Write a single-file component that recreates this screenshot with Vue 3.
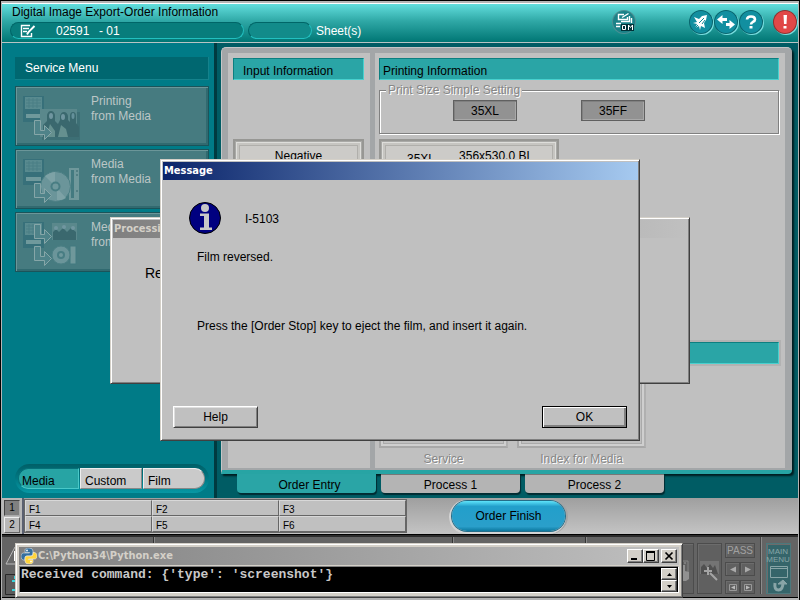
<script setup>
import { ref } from 'vue'

const services = [
  { id: 'print', lines: ['Printing', 'from Media'] },
  { id: 'media', lines: ['Media', 'from Media'] },
  { id: 'both', lines: ['Media', 'from'] },
]
const modes = ['Media', 'Custom', 'Film']
const mode = ref('Media')
const tabs = ['Order Entry', 'Process 1', 'Process 2']
const tab = ref('Order Entry')
const keys = ['F1', 'F2', 'F3', 'F4', 'F5', 'F6']
const page = ref(1)
</script>

<template>
  <div class="app">
    <header class="top">
      <div class="top-left">
        <h1>Digital Image Export-Order Information</h1>
        <div class="pills">
          <div class="pill order">
            <svg width="16" height="14" viewBox="0 0 16 14" fill="none" stroke="#fff">
              <path d="M10 1.500H1.500v11h10V9M3 4.500h6M3 7.500h4" stroke-width="1.400" />
              <path d="M14.500 2L8.500 8l-1.500 2.500" stroke-width="2" />
            </svg>
            <span class="num">02591</span><span>- 01</span>
          </div>
          <div class="pill sheets"></div>
          <span class="sheet-label">Sheet(s)</span>
        </div>
      </div>
      <div class="top-icons">
        <button class="round om" aria-label="Order manager">
          <svg width="22" height="22" viewBox="0 0 22 22" fill="none" stroke="#fff">
            <path d="M11 3.500H5.500v5h9V6M9 6.500l6.500-4" stroke-width="1.400" />
            <path d="M16.500 5v5.500H8M3 12.500h5M3 15.500h4M18.500 7v5" stroke-width="1.400" />
            <path d="M8 13h13v7H8z" fill="#003238" stroke="none" />
            <path d="M9.500 14.500h3v4h-3zM15.500 19v-5l2 2.500 2-2.500v5" />
          </svg>
        </button>
        <button class="round rocket" aria-label="Start">
          <svg width="22" height="22" viewBox="0 0 22 22">
            <path d="M17 4l-5 1-3 3-5-2 3 5-4 1 4 1-2 4 4-2 1 4 1-4 4 2-1-5 2-3z" fill="#fff" />
            <path d="M9 12l5-5M5 17l3-3M12 13l3-4" stroke="#128a96" />
          </svg>
        </button>
        <button class="round" aria-label="Switch">
          <svg width="22" height="22" viewBox="0 0 22 22" fill="#fff">
            <path d="M2 8.500L7.500 4v3H12v3H7.500v3zM20 13.500L14.500 9v3H11v3h3.500v3z" />
          </svg>
        </button>
        <button class="round" aria-label="Help">
          <svg width="22" height="22" viewBox="0 0 22 22" fill="none">
            <path d="M7 8.500Q7 5.500 11 5.500t4 3q0 1.500-2 2.300-2 1-2 2.700" stroke="#fff" stroke-width="2.600" />
            <path d="M9.500 15h3v2.500h-3z" fill="#fff" />
          </svg>
        </button>
        <button class="round alert" aria-label="Alert">
          <svg width="22" height="22" viewBox="0 0 22 22" fill="#fff">
            <path d="M9.500 4h3.500l-.5 9h-2.500zM9.500 15h3v2.500h-3z" />
          </svg>
        </button>
      </div>
    </header>

    <div class="work">
      <nav class="side">
        <h2>Service Menu</h2>
        <button v-for="s in services" :key="s.id" class="service">
          <svg width="60" height="48" viewBox="0 0 60 48">
            <path d="M1 2h21v26H1z" fill="#37707a" />
            <path d="M3 3h17v12H3z" fill="#588a8f" />
            <path d="M4 6h15M4 9h15M4 12h15M7 4v10M11 4v10M15 4v10" stroke="#4a7f85" />
            <path d="M4 20h15v4H4z" fill="#6f999c" />
            <g v-if="s.id === 'print'">
              <path d="M20 18h38v28H20z" fill="#3d6f75" />
              <path d="M18 15h37v28H18z" fill="#5a888c" />
              <path d="M21 43V31l4-4v-6q1-4 4-4t4 4v6l3 3 2-4v-4q1-4 4-4t4 4v4l2 2v-6q0-4 3-4t3 4v7l3 4v10z" fill="#3a686e" />
              <path d="M24 43l4-13 5 7v6zM36 43l3-12 5 4 2 8z" fill="#65908f" />
              <ellipse cx="29" cy="22" rx="2" ry="3" fill="#7096a0" />
              <ellipse cx="41" cy="23" rx="2" ry="3" fill="#7096a0" />
              <ellipse cx="51" cy="22" rx="1.500" ry="3" fill="#64909a" />
            </g>
            <g v-if="s.id === 'media'">
              <path d="M47 11h10v32H47z" fill="#6f989b" />
              <path d="M49 13h3v28h-3z" fill="#437a80" />
              <path d="M54 14h2M54 18h2M54 34h2" stroke="#37666c" />
              <circle cx="33.500" cy="29.500" r="15" fill="#6b959a" stroke="#4c8085" />
              <path d="M33 29L23 19q6-4 10-4zM35 31l9 10q-5 3-9 2z" fill="#7da2a6" />
              <circle cx="33.500" cy="29.500" r="5" fill="#487d83" />
              <circle cx="33.500" cy="29.500" r="3" fill="#6f999d" />
            </g>
            <g v-if="s.id === 'both'">
              <path d="M30 3h25v17H30z" fill="#5a888c" />
              <path d="M31 20v-8l3-3 3 3 4-4 4 4 4-4 5 4v8z" fill="#3a686e" />
              <circle cx="34" cy="8" r="2" fill="#7096a0" />
              <circle cx="42" cy="7" r="2" fill="#7096a0" />
              <circle cx="51" cy="8" r="2" fill="#7096a0" />
              <path d="M48 26h6v18h-6z" fill="#6f989b" stroke="#437a80" />
              <circle cx="39" cy="35" r="9" fill="#6b959a" stroke="#4c8085" />
              <circle cx="39" cy="35" r="4" fill="#487d83" />
              <circle cx="39" cy="35" r="2" fill="#6f999d" />
              <path d="M12.500 4.500h6v10h4v-5l7 7-7 7v-5h-10z" fill="#4f8389" stroke="#86a6a8" />
            </g>
            <path d="M12.500 26.500h6v10h4v-5l7 7-7 7v-5h-10z" fill="#4f8389" stroke="#86a6a8" />
          </svg>
          <span><template v-for="l in s.lines" :key="l">{{ l }}<br /></template></span>
        </button>
        <div class="modes">
          <button v-for="m in modes" :key="m" :class="{ on: m === mode }" @click="mode = m">{{ m }}</button>
        </div>
      </nav>

      <main class="stage">
        <div class="panel">
          <section class="input-col">
            <h3 class="bar">Input Information</h3>
            <button class="inset negative">Negative</button>
          </section>
          <section class="print-col">
            <h3 class="bar">Printing Information</h3>
            <fieldset>
              <legend>Print Size Simple Setting</legend>
              <div class="sizes">
                <button>35XL</button>
                <button>35FF</button>
              </div>
            </fieldset>
            <button class="inset size"><span>35XL</span><span class="dims">356x530.0 BL</span></button>
            <div class="band"></div>
            <div class="extras">
              <div class="extra"><div class="slot"></div><span>Service</span></div>
              <div class="extra"><div class="slot"></div><span>Index for Media</span></div>
            </div>
          </section>
        </div>
        <div class="tabs">
          <button v-for="t in tabs" :key="t" :class="{ on: t === tab }" @click="tab = t">{{ t }}</button>
        </div>
      </main>
    </div>

    <div class="keys">
      <div class="pages">
        <button v-for="n in 2" :key="n" :class="{ on: n === page }" @click="page = n">{{ n }}</button>
      </div>
      <div class="grid">
        <button v-for="k in keys" :key="k">{{ k }}</button>
      </div>
      <div class="finish-area"><button class="finish">Order Finish</button></div>
    </div>

    <footer class="dock">
      <div class="status">
        <svg width="30" height="18" viewBox="0 0 30 18">
          <path d="M1 17L10 0h5l10 17z" fill="#686868" stroke="#bbb" />
          <path d="M9 4h5v10H9z" fill="#fff" />
        </svg>
        <svg width="30" height="21" viewBox="0 0 30 21">
          <path d="M.5.5h28v20H.5z" fill="#5c5c5c" stroke="#292929" />
          <path d="M7 7h4v9h-4M10 2v3" stroke="#39d4dc" stroke-width="2" fill="none" />
        </svg>
      </div>
      <i class="rule"></i><i class="rule second"></i><i class="rule third"></i>
      <div class="tools">
        <button class="tall" aria-label="Film position">
          <svg width="22" height="48" viewBox="0 0 22 48">
            <path d="M0 16h18v12H0z" fill="#606060" stroke="#858585" />
            <path d="M2 18h14" stroke="#999" stroke-dasharray="2 2" />
            <path d="M9 34v-8h3v-6h3v6l4 1v7l-3 2h-5z" fill="#919191" />
          </svg>
        </button>
        <button class="tall" aria-label="Adjust picture">
          <svg width="22" height="48" viewBox="0 0 22 48">
            <path d="M2 16h19v13H2z" fill="#747474" />
            <path d="M3 29v-7l3-3 3 4 3-4 3 4 2-3 3 9z" fill="#505050" />
            <path d="M10 22v8M6 26h8M12 28l7 7" stroke="#a4a4a4" stroke-width="2" />
          </svg>
        </button>
        <div class="pads">
          <button class="pass">PASS</button>
          <div class="pair">
            <button aria-label="Previous"><svg width="13" height="13" viewBox="0 0 13 13"><path d="M10 3.500v6L4 6.500z" fill="#aaa" /></svg></button>
            <button aria-label="Next"><svg width="13" height="13" viewBox="0 0 13 13"><path d="M4 3.500v6l6-3z" fill="#aaa" /></svg></button>
          </div>
          <div class="pair">
            <button aria-label="First"><svg width="13" height="13" viewBox="0 0 13 13"><path d="M3.500 3.500h7v6h-7z" fill="none" stroke="#999" /><path d="M9 4.500v4l-4-2z" fill="#bbb" /></svg></button>
            <button aria-label="Last"><svg width="13" height="13" viewBox="0 0 13 13"><path d="M3.500 3.500h7v6h-7z" fill="none" stroke="#999" /><path d="M5 4.500v4l4-2z" fill="#bbb" /></svg></button>
          </div>
        </div>
        <i class="split"></i>
        <button class="menu">
          <span>MAIN<br />MENU</span>
          <svg width="20" height="28" viewBox="0 0 20 28" fill="none" stroke="#88a5a7">
            <path d="M1.500 1.500h17v11h-17zM1.500 3.500h17" />
            <path d="M6 18q-1 7 3.500 7t4.500-8" stroke-width="3" />
            <path d="M9 19l5-4 4 4z" fill="#88a5a7" />
          </svg>
        </button>
      </div>
    </footer>

    <section class="win processing" aria-label="Processing">
      <div class="caption">Processing</div>
      <p>Reading</p>
    </section>

    <section class="win message" role="dialog" aria-label="Message">
      <div class="caption">Message</div>
      <div class="msg">
        <div class="code">
          <svg width="32" height="32" viewBox="0 0 32 32">
            <circle cx="16" cy="16" r="15.500" fill="#000080" stroke="#000" />
            <circle cx="16" cy="6" r="4" fill="#c8c8c8" />
            <path d="M11 11.500h9v14h3V28H11v-2.500h4V14h-4z" fill="#c8c8c8" />
          </svg>
          <span>I-5103</span>
        </div>
        <p class="fact">Film reversed.</p>
        <p class="todo">Press the [Order Stop] key to eject the film, and insert it again.</p>
        <div class="actions">
          <button>Help</button>
          <button class="default">OK</button>
        </div>
      </div>
    </section>

    <section class="console" aria-label="Python console">
      <div class="caption">
        <svg width="16" height="16" viewBox="0 0 16 16">
          <path d="M8 0C4 0 4 1.500 4 3v1.500h4.500V5H2.500C.5 5 0 7 0 8.500S1 12 2.500 12H4v-2q0-2 2-2h4q2 0 2-2V3q0-3-4-3z" fill="#356f9f" stroke="#dfe6ea" stroke-width=".6" />
          <path d="M8 16c4 0 4-1.500 4-3v-1.500H7.500V11h6c2 0 2.500-1.500 2.500-3s-1-3.500-2.500-3.500H12V6q0 2-2 2H6q-2 0-2 2v3q0 3 4 3z" fill="#ffd43b" stroke="#eee" stroke-width=".6" />
          <circle cx="6" cy="2.500" r=".9" fill="#fff" /><circle cx="10" cy="13.500" r=".9" fill="#fff" />
        </svg>
        <span class="path">C:\Python34\Python.exe</span>
        <button aria-label="Minimize"><svg width="12" height="10" viewBox="0 0 12 10"><path d="M2 7h6v2H2z" /></svg></button>
        <button aria-label="Maximize"><svg width="12" height="10" viewBox="0 0 12 10"><path d="M1.500 1v8.500h8V1" fill="none" stroke="#000" /><path d="M1 0h9v2H1z" /></svg></button>
        <button class="close" aria-label="Close"><svg width="12" height="10" viewBox="0 0 12 10"><path d="M2.500 1.500l7 7M9.500 1.500l-7 7" stroke="#000" stroke-width="1.700" /></svg></button>
      </div>
      <div class="term">
        <pre>Received command: {'type': 'screenshot'}</pre>
        <div class="scroll">
          <button aria-label="Scroll up"><svg width="5" height="3" viewBox="0 0 5 3"><path d="M0 3l2.500-3L5 3z" /></svg></button>
          <button aria-label="Scroll down"><svg width="5" height="3" viewBox="0 0 5 3"><path d="M0 0l2.500 3L5 0z" /></svg></button>
        </div>
      </div>
    </section>
  </div>
</template>

<style>
body {
  background: #c0c0c0;
}
</style>

<style scoped>
* {
  box-sizing: border-box;
}
.app {
  position: relative;
  display: flex;
  flex-direction: column;
  min-height: 100vh;
  padding: 2px 1px 2px 1px;
  border-top: 1px solid #000;
  border-left: 1px solid #000;
  border-right: 1px solid #000;
  background: #b4b4b4;
  font: 12px/15px "Liberation Sans", Arial, sans-serif;
  color: #000;
  overflow: hidden;
}
button {
  font: inherit;
  color: inherit;
  padding: 0;
  margin: 0;
  border: 0;
  background: none;
}
h1, h2, h3, p, pre {
  margin: 0;
  font-size: 12px;
  font-weight: normal;
}
svg {
  display: block;
  flex: none;
}

/* header */
.top {
  display: flex;
  justify-content: space-between;
  height: 40px;
  border-top: 1px solid #fff;
  border-bottom: 1px solid #b8c4c4;
  background: linear-gradient(#62dedd, #2fa8a6 45%, #007674);
  padding: 0 2px 0 8px;
}
.top h1 {
  padding: 1px 0 2px 2px;
}
.pills {
  display: flex;
  align-items: center;
  gap: 4px;
  color: #fff;
}
.pill {
  display: flex;
  align-items: center;
  height: 17px;
  padding-top: 1px;
  border-radius: 9px;
  background: #087d7c;
  border: 1px solid #006668;
  border-right-color: #22c0c0;
  border-bottom-color: #22c0c0;
}
.order {
  width: 234px;
  padding-left: 9px;
}
.num {
  width: 43px;
  margin-left: 20px;
}
.sheets {
  width: 64px;
  background: #128b8a;
}
.sheet-label {
  padding-top: 1px;
}
.top-icons {
  display: flex;
  align-items: center;
  gap: 3px;
  padding-bottom: 2px;
}
.round {
  width: 22px;
  height: 22px;
  border-radius: 50%;
  background: #128fa0;
  box-shadow: 0 0 0 1px #08656e, 1px 1px 0 1px #7adfe0;
}
.om {
  background: #1b8288;
  box-shadow: 0 0 0 1px #4c9094;
}
.rocket {
  margin-left: 52px;
}
.alert {
  margin-left: 9px;
  background: #e04848;
  box-shadow: 0 0 0 1px #8c3030, 1px 1px 0 1px #7adfe0;
}

/* work area */
.work {
  display: flex;
  flex: 1;
  background: #005c64;
}
.side {
  display: flex;
  flex-direction: column;
  flex: none;
  width: 215px;
  padding: 14px 5px 5px 13px;
  background: #007b87;
  border-right: 3px solid #003a40;
}
.side h2 {
  width: 194px;
  height: 23px;
  margin-bottom: 6px;
  padding: 4px 10px;
  color: #fff;
  background: #006770;
  border-right: 1px solid #14828c;
  border-bottom: 1px solid #14828c;
}
.service {
  display: flex;
  height: 60px;
  margin-bottom: 3px;
  padding: 7px 6px 5px;
  gap: 9px;
  text-align: left;
  color: #bcc6c6;
  background: #467b80;
  border: 1px solid #1b545a;
  box-shadow: inset 1px 1px 0 #6b9699, inset -2px -2px 0 #316a70;
}
.modes {
  display: flex;
  width: 194px;
  height: 29px;
  margin-top: auto;
  padding: 4px 4px 4px 3px;
  gap: 1px;
  border-radius: 15px;
  background: linear-gradient(#005f67, #007883 50%, #0898a4);
}
.modes button {
  flex: 1;
  padding: 5px 0 0 4px;
  text-align: left;
  background: #cacaca;
  border: 1px solid #eee;
  border-right-color: #888;
  border-bottom-color: #888;
}
.modes button:first-child {
  padding-left: 3px;
  border-radius: 10px 0 0 10px;
}
.modes button:last-child {
  border-radius: 0 10px 10px 0;
}
.modes .on {
  background: #27a4a4;
  border-color: #067078 #48c8c8 #48c8c8 #067078;
}
.stage {
  display: flex;
  flex-direction: column;
  flex: 1;
  padding: 4px 6px 5px 4px;
}
.panel {
  display: flex;
  flex: 1;
  gap: 5px;
  padding: 5px 7px 2px 6px;
  border-top: 1px solid #c4c6c7;
  border-left: 1px solid #c4c6c7;
  border-bottom: 4px solid #27a4a4;
  border-radius: 5px 5px 4px 0;
  background: #a3a6a8;
  box-shadow: 2px 2px 2px #001c20;
}
.input-col,
.print-col {
  display: flex;
  flex-direction: column;
  background: #c0c0c0;
}
.input-col {
  width: 142px;
  padding: 5px 6px 5px 5px;
}
.print-col {
  flex: 1;
  padding: 5px 6px 1px 4px;
}
.bar {
  height: 22px;
  padding: 5px 3px 0;
  background: #2aa5a6;
  border: 1px solid #0c7f80;
  border-right-color: #48d0ce;
  border-bottom-color: #48d0ce;
}
.input-col .bar {
  padding-left: 9px;
}
.inset {
  border: 2px solid #979794;
  background: #cccbc8;
  box-shadow: inset 0 0 0 1px #a9a9a6, inset 0 0 0 2px #dededb, inset 0 0 0 4px #c6c5c1, inset 0 0 0 5px #b0afab;
}
.negative {
  height: 64px;
  margin-top: 59px;
  padding-bottom: 30px;
}
fieldset {
  margin: 3px 0 0;
  padding: 3px 0 12px 73px;
  border: 1px solid #808080;
  box-shadow: 1px 1px 0 #fff, inset 1px 1px 0 #fff;
}
legend {
  margin-left: -67px;
  padding: 0 2px;
  line-height: 14px;
  color: #868686;
  text-shadow: 1px 1px 0 #fff;
  background: #c0c0c0;
}
.sizes {
  display: flex;
  gap: 64px;
}
.sizes button {
  width: 64px;
  height: 21px;
  padding-top: 1px;
  background: #929292;
  border: 1px solid #606060;
  box-shadow: inset 1px 1px 0 #808080, inset -1px -1px 0 #a8a8a8;
}
.size {
  display: flex;
  width: 180px;
  height: 64px;
  margin-top: 5px;
  padding: 11px 0 0 26px;
  gap: 24px;
}
.size .dims {
  margin-top: -3px;
}
.band {
  height: 22px;
  margin-top: auto;
  background: #2aa5a6;
  border: 1px solid #0c7f80;
  border-right-color: #48d0ce;
  border-bottom-color: #48d0ce;
  box-shadow: 0 0 0 2px #b2b2b2;
}
.extras {
  display: flex;
  gap: 9px;
  padding-top: 12px;
}
.extra {
  width: 129px;
  text-align: center;
  color: #868686;
  text-shadow: 1px 1px 0 #fff;
}
.slot {
  height: 72px;
  margin-bottom: 4px;
  border: 2px solid #a8a8a8;
  border-right-color: #b0b0b0;
  box-shadow: inset 0 0 0 2px #cfcfcf, inset 0 0 0 3px #aaa;
}
.tabs {
  display: flex;
  gap: 5px;
  padding-left: 16px;
}
.tabs button {
  width: 139px;
  height: 19px;
  padding-top: 3px;
  border-radius: 0 0 4px 4px;
  background: #b4b4b4;
  box-shadow: 1px 2px 1px #002c32, inset 0 1px 0 #777;
}
.tabs .on {
  padding-left: 6px;
  background: #2aa5a6;
  box-shadow: 1px 2px 1px #002c32;
}

/* function keys */
.keys {
  display: flex;
  height: 37px;
  border-bottom: 1px solid #000;
  background: linear-gradient(#9f9f9f, #c4c4c4);
}
.pages {
  display: flex;
  flex-direction: column;
  gap: 1px;
  width: 22px;
  padding: 2px 2px 1px 2px;
  background: #b8b8b8;
  border-right: 2px solid #5a6070;
}
.pages button {
  flex: 1;
  font-size: 10px;
  line-height: 12px;
  border: 1px solid #eee;
  border-right-color: #666;
  border-bottom-color: #666;
}
.pages .on {
  background: #808080;
  border-color: #444 #aaa #aaa #444;
}
.grid {
  display: grid;
  grid-template-columns: repeat(3, 127px);
  grid-template-rows: 16px 16px;
  margin: 1px 0;
  border: 1px solid #666;
  background: #c0c0c0;
}
.grid button {
  padding: 3px 0 0 3px;
  font-size: 10px;
  line-height: 12px;
  text-align: left;
  border: 1px solid #d8d8d8;
  border-right-color: #666;
  border-bottom-color: #666;
}
.finish-area {
  padding: 3px 0 0 45px;
}
.finish {
  width: 113px;
  height: 30px;
  border-radius: 15px;
  background: linear-gradient(#5ee4fb, #229fcb 18%, #2a9fca 85%, #0c789f);
  box-shadow: 0 0 0 1px #256d88, -1px 1px 0 2px #d4d4d4, 0 0 0 3px #a4a4a4;
}

/* device dock */
.dock {
  display: flex;
  height: 63px;
  padding-right: 7px;
  border-top: 2px solid #2c2c2c;
  border-bottom: 1px solid #000;
  background: #646464;
}
.status {
  display: flex;
  flex-direction: column;
  gap: 9px;
  padding: 10px 0 0 3px;
  width: 151px;
}
.rule {
  width: 2px;
  height: 6px;
  border-left: 1px solid #333;
  border-right: 1px solid #888;
}
.second {
  margin-left: 297px;
}
.third {
  margin-left: 131px;
}
.tools {
  display: flex;
  gap: 3px;
  margin-left: auto;
  padding: 6px 0 3px;
  color: #a0a0a0;
}
.tools button {
  background: #606060;
  border: 1px solid #4c4c4c;
  box-shadow: inset 1px 1px 0 #6c6c6c;
}
.tools .tall {
  width: 25px;
}
.pads {
  display: flex;
  flex-direction: column;
  justify-content: space-between;
  width: 30px;
}
.tools .pass {
  height: 15px;
  font-size: 10px;
  line-height: 12px;
}
.pair {
  display: flex;
}
.pair button {
  width: 15px;
  height: 14px;
}
.split {
  width: 2px;
  margin: -6px 1px 0 2px;
  border-left: 1px solid #444;
  border-right: 1px solid #8b8b8b;
}
.tools .menu {
  width: 25px;
  padding: 3px 0 0 2px;
  background: #35656a;
  border-color: #4b787c;
  color: #88a5a7;
  font-size: 8px;
  line-height: 8px;
}
.menu span {
  display: block;
  margin: 0 0 1px -3px;
}

/* floating windows */
.win {
  position: absolute;
  padding: 1px;
  background: #c0c0c0;
  border: 1px solid #d4d0c8;
  border-right-color: #404040;
  border-bottom-color: #404040;
  box-shadow: inset 1px 1px 0 #fff, inset -1px -1px 0 #808080;
}
.caption {
  font: bold 11px/18px "DejaVu Sans Condensed", "Noto Sans", sans-serif;
}
.win .caption {
  height: 18px;
  margin: 1px 0 0 1px;
  padding-left: 1px;
}
.processing {
  left: 109px;
  top: 216px;
  width: 580px;
  height: 167px;
}
.processing .caption {
  color: #d4d0c8;
  background: linear-gradient(90deg, #808080, #c0c0c0);
}
.processing p {
  padding: 27px 0 0 33px;
  font-size: 14px;
  line-height: 16px;
}
.message {
  left: 159px;
  top: 158px;
  width: 480px;
}
.message .caption {
  color: #fff;
  background: linear-gradient(90deg, #0a246a, #a6caf0);
}
.msg {
  padding: 22px 11px 11px;
}
.code {
  display: flex;
  align-items: center;
  gap: 24px;
  padding-left: 16px;
}
.code span {
  padding-top: 3px;
}
.msg p {
  padding-left: 24px;
  line-height: 16px;
}
.fact {
  margin-top: 15px;
}
.todo {
  margin-top: 53px;
}
.actions {
  display: flex;
  justify-content: space-between;
  margin-top: 72px;
}
.actions button {
  width: 85px;
  height: 22px;
  border: 1px solid #fff;
  border-right-color: #404040;
  border-bottom-color: #404040;
  box-shadow: inset 1px 1px 0 #dedede, inset -1px -1px 0 #808080;
}
.actions .default {
  border-color: #000;
  box-shadow: inset 1px 1px 0 #fff, inset -2px -2px 0 #808080;
}

/* console */
.console {
  position: absolute;
  left: 14px;
  bottom: 2px;
  width: 668px;
  height: 55px;
  padding: 3px;
  background: #d4d0c8;
  border: 1px solid #d4d0c8;
  border-right-color: #404040;
  border-bottom-color: #404040;
  box-shadow: inset 1px 1px 0 #fff, inset -1px -1px 0 #808080;
}
.console .caption {
  display: flex;
  align-items: center;
  height: 18px;
  padding: 0 2px;
  color: #d4d0c8;
  background: linear-gradient(90deg, #808080, #c0c0c0);
}
.path {
  flex: 1;
  padding-left: 1px;
}
.console button {
  display: flex;
  align-items: center;
  justify-content: center;
  width: 16px;
  height: 14px;
  background: #d4d0c8;
  border: 1px solid #fff;
  border-right-color: #404040;
  border-bottom-color: #404040;
  box-shadow: inset -1px -1px 0 #808080;
}
.console .close {
  margin-left: 2px;
}
.term {
  display: flex;
  justify-content: space-between;
  height: 27px;
  margin-top: 1px;
  padding: 1px;
  border: 1px solid #808080;
  border-right-color: #fff;
  border-bottom-color: #fff;
  background: #000;
}
pre {
  font: bold 13px/13px "Liberation Mono", "Courier New", monospace;
  color: #c8c8c8;
}
.console .scroll button {
  height: 12px;
}
</style>
